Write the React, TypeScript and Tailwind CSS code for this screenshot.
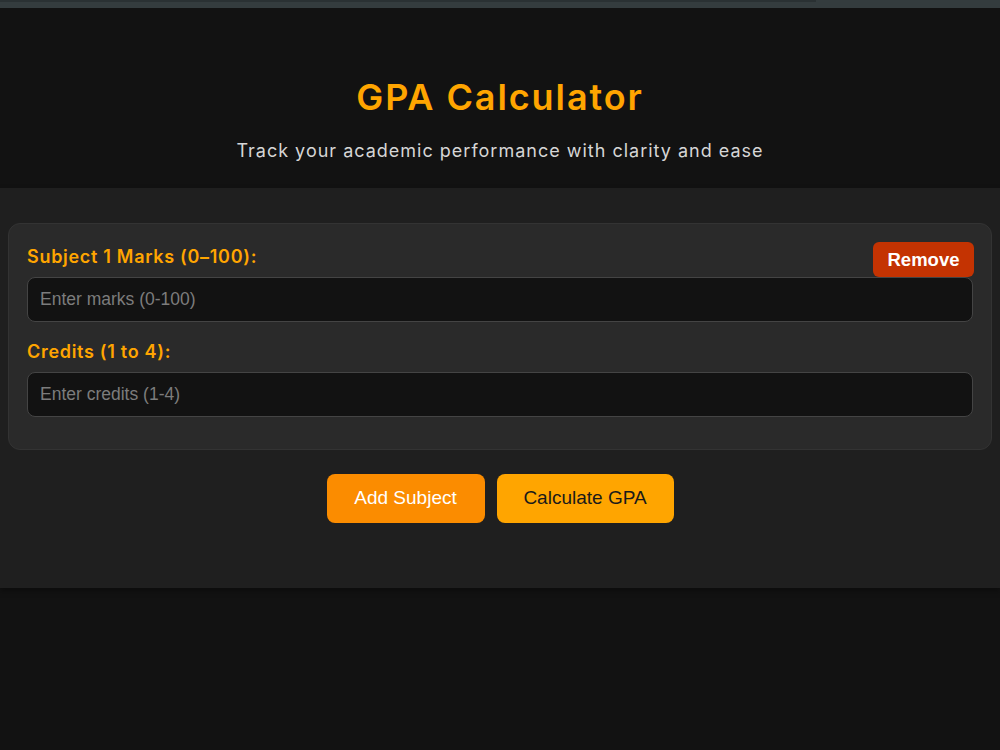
import React, { useState } from 'react';

type Subject = { id: number; marks: string; credits: string };

const heading = { fontFamily: '"Inter", "Noto Sans", sans-serif' };
const body = { fontFamily: '"Liberation Sans", Arial, sans-serif' };

export default function App() {
  const [subjects, setSubjects] = useState<Subject[]>([{ id: 1, marks: '', credits: '' }]);

  const addSubject = () =>
    setSubjects((prev) => [...prev, { id: prev.length + 1, marks: '', credits: '' }]);

  const removeSubject = (id: number) =>
    setSubjects((prev) => prev.filter((s) => s.id !== id));

  return (
    <div className="min-h-[750px] bg-[#121212] text-white">
      <div className="h-2 bg-[#343c3e] flex">
        <div className="h-[2px] w-[816px] bg-[#2a3133]" />
      </div>

      <header className="pt-[68px] pb-6 text-center" style={heading}>
        <h1 className="text-[36px] leading-[43px] font-semibold text-[#ffa500] tracking-[1.9px]">
          GPA Calculator
        </h1>
        <p className="mt-[18px] text-[18px] leading-[27px] text-[#d6d6d6] tracking-[1px]">
          Track your academic performance with clarity and ease
        </p>
      </header>

      <main className="relative bg-[#1f1f1f] px-2 pt-[35px] pb-[65px] shadow-[0_3px_6px_rgba(0,0,0,0.35)]">
        {subjects.map((subject, i) => (
          <div
            key={subject.id}
            className="relative mb-6 rounded-xl border border-[#333] bg-[#2a2a2a] px-[18px] pt-[19px] pb-[18px]"
          >
            <button
              onClick={() => removeSubject(subject.id)}
              className="absolute right-[17px] top-[18px] h-[35px] w-[101px] rounded-md bg-[#c43302] text-[18.5px] font-bold text-white"
              style={body}
            >
              Remove
            </button>
            <label
              className="block text-[18px] leading-[27px] font-semibold text-[#ffa500] tracking-[0.7px]"
              style={heading}
            >
              Subject {i + 1} Marks (0–100):
            </label>
            <input
              type="number"
              placeholder="Enter marks (0-100)"
              className="mt-[7px] mb-4 block h-[45px] w-full rounded-lg border border-[#444] bg-[#121212] px-3 text-[17.5px] text-white placeholder:text-[#7c7c7c] outline-none"
              style={body}
            />
            <label
              className="block text-[18px] leading-[27px] font-semibold text-[#ffa500] tracking-[0.7px]"
              style={heading}
            >
              Credits (1 to 4):
            </label>
            <input
              type="number"
              placeholder="Enter credits (1-4)"
              className="mt-[7px] mb-[14px] block h-[45px] w-full rounded-lg border border-[#444] bg-[#121212] px-3 text-[17.5px] text-white placeholder:text-[#7c7c7c] outline-none"
              style={body}
            />
          </div>
        ))}

        <div className="flex justify-center gap-3" style={body}>
          <button
            onClick={addSubject}
            className="h-[49px] w-[158px] rounded-lg bg-[#fb8c00] text-[19px] text-white"
          >
            Add Subject
          </button>
          <button className="h-[49px] w-[177px] rounded-lg bg-[#ffa500] text-[19px] text-[#1a1a1a]">
            Calculate GPA
          </button>
        </div>
      </main>
    </div>
  );
}
